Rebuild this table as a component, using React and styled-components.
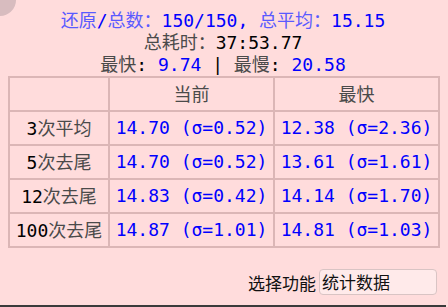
import React from 'react'
import styled, { createGlobalStyle } from 'styled-components'

const GlobalStyle = createGlobalStyle`
    html, body {
        margin: 0;
        padding: 0;
        background: #ffdcdc;
    }
`

const Panel = styled.div`
    position: relative;
    width: 446px;
    height: 305px;
    background: #ffdcdc;
    border-bottom: 2px solid #3a3a3a;
    font-family: "DejaVu Sans Mono", "Noto Sans CJK SC", monospace;
    font-size: 18px;
    color: #000;
    overflow: hidden;
`

const CornerDot = styled.div`
    position: absolute;
    left: -16px;
    top: -16px;
    width: 32px;
    height: 32px;
    border-radius: 50%;
    background: #d8bcbf;
`

const Summary = styled.div`
    padding-top: 10px;
    text-align: center;
`

const Line = styled.div`
    height: 22px;
    line-height: 22px;
    white-space: pre;
    color: ${p => (p.$blue ? '#0000ff' : '#000')};
`

const Cjk = styled.span`
    font-family: "Noto Sans CJK SC", sans-serif;
    line-height: 1;
    color: ${p => (p.$blue ? '#5a5aff' : '#4a4a4a')};
`

const Num = styled.span`
    color: ${p => (p.$black ? '#000' : '#0000ff')};
`

const Table = styled.table`
    width: 430px;
    margin: 0 8px;
    border-collapse: collapse;
    table-layout: fixed;
`

const Cell = styled.td`
    height: 32px;
    padding: 0;
    border: 2px solid #dbb6b6;
    text-align: center;
    vertical-align: middle;
    white-space: nowrap;
    line-height: 20px;
    color: ${p => (p.$value ? '#0000ff' : '#000')};
`

const Footer = styled.div`
    display: flex;
    justify-content: flex-end;
    align-items: center;
    gap: 3px;
    margin-top: 21px;
    padding-right: 9px;
    font-family: "Noto Sans CJK SC", sans-serif;
    font-size: 17px;
    color: #111;
`

const Select = styled.div`
    width: 114px;
    height: 24px;
    padding-left: 2px;
    line-height: 24px;
    background: #ffeaea;
    border: 1px solid #d9c4c4;
    border-radius: 4px;
`

const rows = [
    { n: '3', label: '次平均', cur: '14.70 (σ=0.52)', best: '12.38 (σ=2.36)' },
    { n: '5', label: '次去尾', cur: '14.70 (σ=0.52)', best: '13.61 (σ=1.61)' },
    { n: '12', label: '次去尾', cur: '14.83 (σ=0.42)', best: '14.14 (σ=1.70)' },
    { n: '100', label: '次去尾', cur: '14.87 (σ=1.01)', best: '14.81 (σ=1.03)' },
]

export default function App() {
    return (
        <Panel>
            <GlobalStyle />
            <CornerDot />

            {/* SUMMARY */}
            <Summary>
                <Line $blue>
                    <Cjk $blue>还原</Cjk>/<Cjk $blue>总数：</Cjk>150/150, <Cjk $blue>总平均：</Cjk>15.15
                </Line>
                <Line>
                    <Cjk>总耗时：</Cjk><Num $black>37:53.77</Num>
                </Line>
                <Line>
                    <Cjk>最快</Cjk>: <Num>9.74</Num> | <Cjk>最慢</Cjk>: <Num>20.58</Num>
                </Line>
            </Summary>

            {/* STATS TABLE */}
            <Table>
                <colgroup>
                    <col style={{ width: 100 }} />
                    <col style={{ width: 165 }} />
                    <col style={{ width: 165 }} />
                </colgroup>
                <tbody>
                    <tr>
                        <Cell />
                        <Cell><Cjk>当前</Cjk></Cell>
                        <Cell><Cjk>最快</Cjk></Cell>
                    </tr>
                    {rows.map(r => (
                        <tr key={r.n}>
                            <Cell>{r.n}<Cjk>{r.label}</Cjk></Cell>
                            <Cell $value>{r.cur}</Cell>
                            <Cell $value>{r.best}</Cell>
                        </tr>
                    ))}
                </tbody>
            </Table>

            {/* FUNCTION PICKER */}
            <Footer>
                <span>选择功能</span>
                <Select>统计数据</Select>
            </Footer>
        </Panel>
    )
}
